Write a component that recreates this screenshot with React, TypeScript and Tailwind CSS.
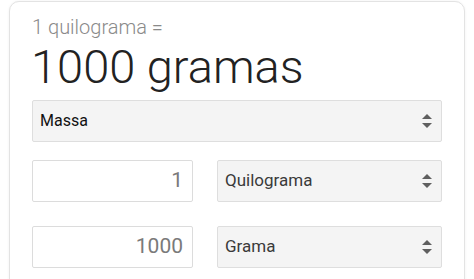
import React from 'react';

const Arrows: React.FC = () => (
  <svg width="10" height="14" viewBox="0 0 10 14" className="shrink-0">
    <path d="M5 0 L10 5 L0 5 Z" fill="#5f5f5f" />
    <path d="M0 9 L10 9 L5 14 Z" fill="#5f5f5f" />
  </svg>
);

const Select: React.FC<{ label: string; className?: string; textClass?: string }> = ({ label, className = '', textClass = '' }) => (
  <div
    className={`h-[42px] flex items-center justify-between bg-[#f4f4f4] border border-[#dedede] rounded-[2px] pl-[7px] pr-[9px] ${className}`}
  >
    <span className={textClass}>{label}</span>
    <Arrows />
  </div>
);

const Field: React.FC<{ value: string }> = ({ value }) => (
  <div className="w-[161px] h-[42px] flex items-center justify-end bg-white border border-[#dcdcdc] rounded-[2px] pr-[9px] text-[21px] text-[#7a7a7a]">
    {value}
  </div>
);

export default function App() {
  return (
    <div className="w-[474px] h-[279px] overflow-hidden bg-white pl-[9px] pt-[1px]" style={{ fontFamily: 'Roboto, "Noto Sans", sans-serif' }}>
      <div className="w-[456px] h-[320px] bg-white border border-[#e3e3e3] rounded-[10px] shadow-[0_0_3px_rgba(0,0,0,0.06)] pl-[22px] pr-[22px] pt-[13px]">
        <div className="text-[20px] leading-[24px] text-[#8a8a8a] font-light">1 quilograma =</div>
        <div className="text-[47px] leading-[56px] text-[#222222] font-light -ml-[1px]">1000 gramas</div>
        <Select label="Massa" className="mt-[5px] w-[410px]" textClass="text-[16px] text-[#111111]" />
        <div className="flex gap-[24px] mt-[18px]">
          <Field value="1" />
          <Select label="Quilograma" className="w-[225px]" textClass="text-[17px] text-[#3a3a3a]" />
        </div>
        <div className="flex gap-[24px] mt-[24px]">
          <Field value="1000" />
          <Select label="Grama" className="w-[225px]" textClass="text-[17px] text-[#3a3a3a]" />
        </div>
      </div>
    </div>
  );
}
